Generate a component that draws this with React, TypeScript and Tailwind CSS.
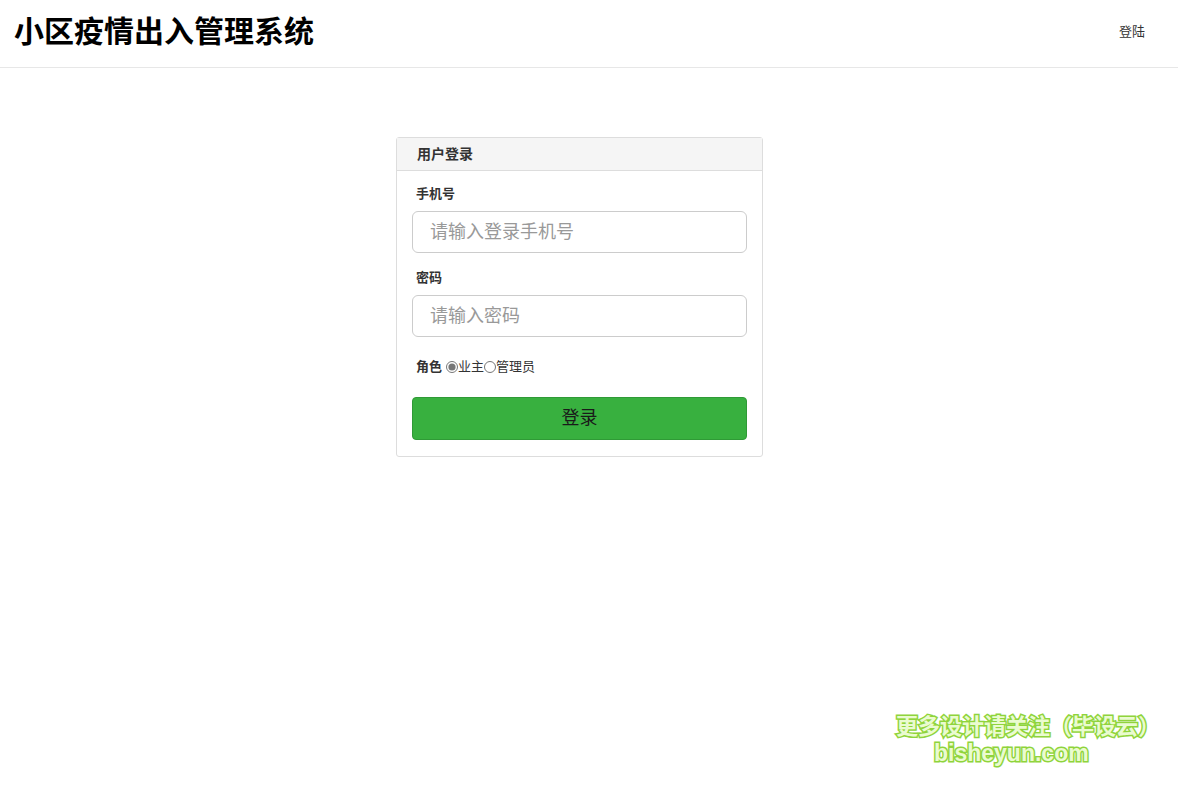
import React, { useState } from 'react';

const FONT = "font-['Liberation_Sans','Noto_Sans_CJK_SC',sans-serif]";

export default function App() {
  const [phone, setPhone] = useState('');
  const [password, setPassword] = useState('');
  const [role, setRole] = useState('owner');

  return (
    <div className={`${FONT} min-h-[789px] bg-white text-[#333] relative`}>
      {/* 顶部 */}
      <header className="h-[68px] border-b border-[#e7e7e7] flex items-center justify-between pl-[14px] pr-[33px]">
        <h1 className="text-[30px] font-bold text-black leading-none -mt-[4px]">小区疫情出入管理系统</h1>
        <a href="#" className="text-[13px] text-[#333] -mt-[4px]">登陆</a>
      </header>

      {/* 登录面板 */}
      <div className="flex justify-center pr-[19px] pt-[69px]">
        <div className="w-[367px] border border-[#ddd] rounded-[3px] bg-white">
          <div className="h-[33px] bg-[#f5f5f5] border-b border-[#ddd] px-[20px] flex items-center">
            <span className="text-[14px] font-bold text-[#333]">用户登录</span>
          </div>
          <div className="px-[15px] pt-[14px] pb-[16px]">
            <label className="block text-[13px] leading-[18px] font-bold text-[#333] pl-[4px] mb-[8px]">手机号</label>
            <input
              value={phone}
              onChange={(e) => setPhone(e.target.value)}
              placeholder="请输入登录手机号"
              className="block w-full h-[42px] border border-[#ccc] rounded-[6px] px-[17px] text-[18px] text-[#555] placeholder:text-[#999] outline-none"
            />
            <label className="block text-[13px] leading-[18px] font-bold text-[#333] pl-[4px] mt-[16px] mb-[8px]">密码</label>
            <input
              type="password"
              value={password}
              onChange={(e) => setPassword(e.target.value)}
              placeholder="请输入密码"
              className="block w-full h-[42px] border border-[#ccc] rounded-[6px] px-[17px] text-[18px] text-[#555] placeholder:text-[#999] outline-none"
            />
            <div className="flex items-center pl-[4px] mt-[20px] text-[13px] h-[20px]">
              <span className="font-bold mr-[4px]">角色</span>
              <input
                type="radio"
                name="role"
                checked={role === 'owner'}
                onChange={() => setRole('owner')}
                className="w-[12px] h-[12px] m-0 accent-[#777]"
              />
              <span>业主</span>
              <input
                type="radio"
                name="role"
                checked={role === 'admin'}
                onChange={() => setRole('admin')}
                className="w-[12px] h-[12px] m-0 accent-[#777]"
              />
              <span>管理员</span>
            </div>
            <button className="block w-full h-[43px] mt-[20px] bg-[#38b03f] border border-[#2f9a36] rounded-[4px] text-[18px] text-[#1a1a1a]">
              登录
            </button>
          </div>
        </div>
      </div>

      {/* 水印 */}
      <div className="absolute left-[896px] top-[713px] text-[22px] font-bold leading-[27px] text-[#eafbd0] [-webkit-text-stroke:3px_#8fd43c] [paint-order:stroke_fill]">
        <div>更多设计请关注（毕设云）</div>
        <div className="pl-[38px] text-[23px]">bisheyun.com</div>
      </div>
    </div>
  );
}
